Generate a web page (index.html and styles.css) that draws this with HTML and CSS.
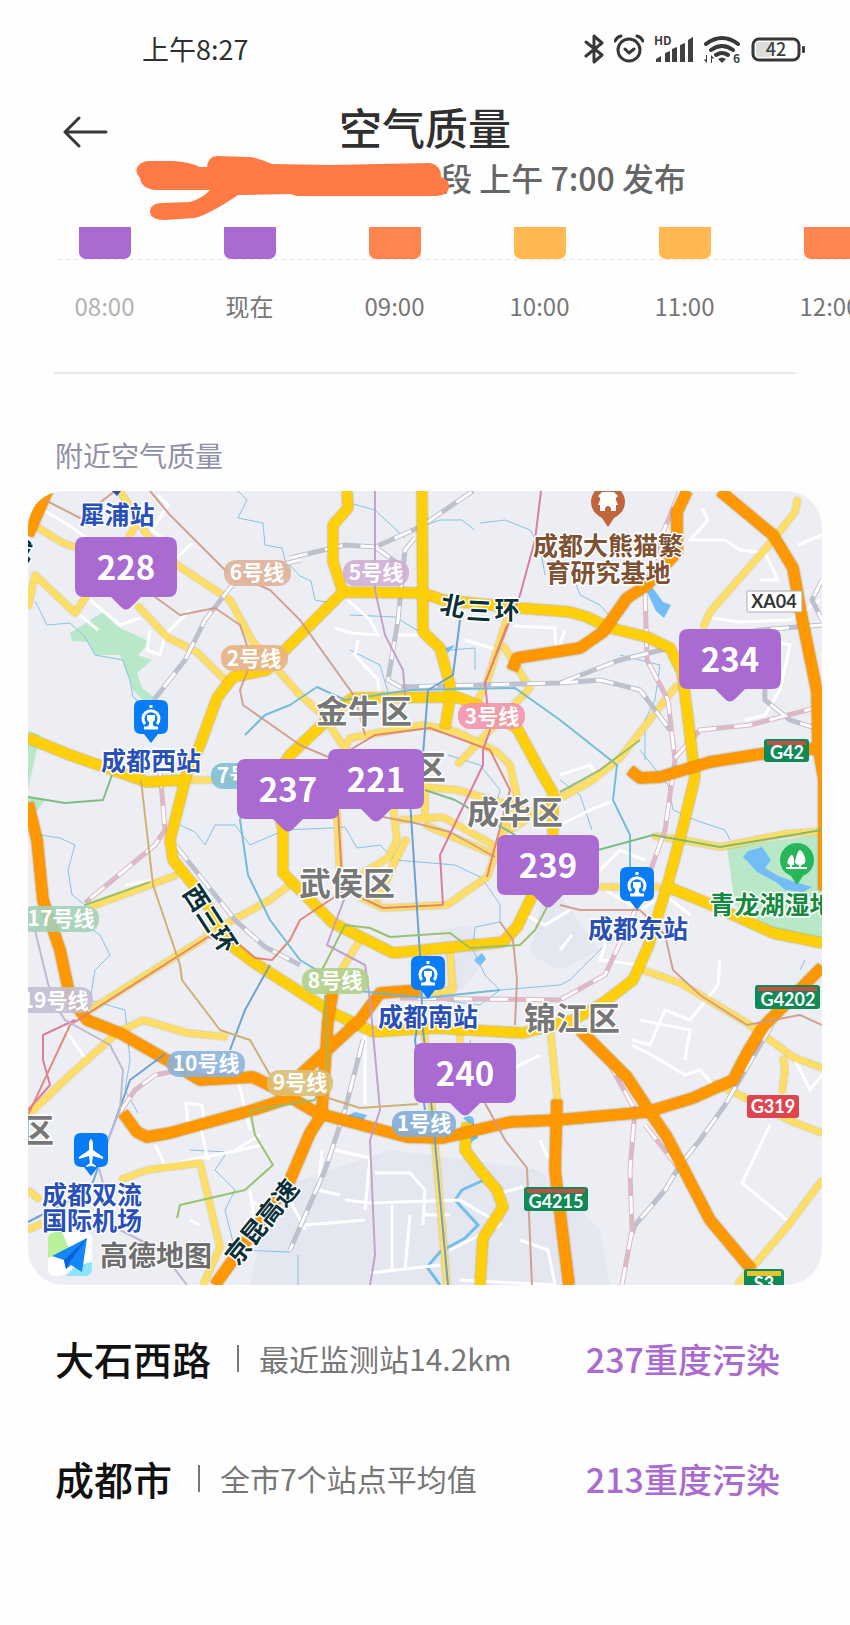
FILE: index.html
```
<!DOCTYPE html>
<html lang="zh-CN">
  <head>
    <meta charset="UTF-8" />
    <title>空气质量</title>
    <meta name="viewport" content="width=device-width, initial-scale=1.0" />
    <link rel="stylesheet" href="styles.css">
  </head>
  <body>
    <div class="status">
      <span class="time">上午8:27</span>
      <div class="status-icons">
        <svg width="20" height="32" viewBox="0 0 20 32" class="line">
          <path d="M2 9L18 22L10 29V3L18 10L2 23" />
        </svg>
        <svg width="30" height="32" viewBox="0 0 30 32" class="line">
          <circle cx="15" cy="17" r="11" />
          <path d="M11 16l4 4 5-4M1 8q2-4 6-5M29 8q-2-4-6-5" />
        </svg>
        <svg width="40" height="32" viewBox="0 0 40 32">
          <text x="0" y="12" class="tiny">HD</text>
          <path d="M2 29v-3l5-3v6zM11 29V20l5-2v11zM18 29V16l5-2v15zM26 29V12l5-2v19zM34 29V7l5-3v25z" />
        </svg>
        <svg width="37" height="32" viewBox="0 0 37 32">
          <path class="line thick" d="M2 11q16-12 32 0M7 17q11-8 22 0M12 22q6-4 12 0" />
          <path d="M18 30l-4-4q4-3 8 0zM3 22v8l-3-3 1-1 1 1v-5zM7 30v-8l3 3-1 1-1-1v5z" />
          <text x="29" y="30" class="tiny">6</text>
        </svg>
        <svg width="54" height="32" viewBox="0 0 54 32">
          <rect x="5" y="9" width="15" height="15" rx="2" fill="#ddd" />
          <rect class="line" x="2" y="6" width="46" height="21" rx="6" />
          <rect x="51" y="13" width="3" height="7" rx="1" />
          <text x="25" y="23" class="percent">42</text>
        </svg>
      </div>
    </div>

    <header class="header">
      <button class="back" aria-label="返回">
        <svg width="46" height="32" viewBox="0 0 46 32" class="line">
          <path d="M17 2L3 16l14 14M3 16h41" />
        </svg>
      </button>
      <h1>空气质量</h1>
    </header>
    <div class="publish">
      <p>段 上午 7:00 发布</p>
      <svg class="scribble" width="330" height="70" viewBox="128 152 330 70">
        <path d="M150 161H173Q190 162 200 167L207 167Q208 157 216 156L250 157Q262 159 272 164L330 165L430 163Q441 165 441 177Q450 180 449 188Q447 197 430 196L297 196L290 194L238 195Q210 214 195 218L165 220Q150 220 150 211Q151 203 162 203L190 202Q203 198 210 190H155Q141 188 140 178Q134 172 138 166Q142 161 150 161Z" />
      </svg>
    </div>

    <ul class="hours">
      <li class="past"><i class="bar heavy"></i><span>08:00</span></li>
      <li><i class="bar heavy"></i><span>现在</span></li>
      <li><i class="bar medium"></i><span>09:00</span></li>
      <li><i class="bar light"></i><span>10:00</span></li>
      <li><i class="bar light"></i><span>11:00</span></li>
      <li><i class="bar medium"></i><span>12:00</span></li>
    </ul>

    <hr>
    <h2>附近空气质量</h2>

    <svg class="map" viewBox="28 491 794 794">
      <defs>
        <path id="pin" d="M-42-73H42Q51-73 51-64V-22Q51-13 42-13H15L5-3Q0 2-5-3L-15-13H-42Q-51-13-51-22V-64Q-51-73-42-73Z" />
        <path id="pin-narrow" d="M-39-73H39Q48-73 48-64V-22Q48-13 39-13H15L5-3Q0 2-5-3L-15-13H-39Q-48-13-48-22V-64Q-48-73-39-73Z" />
        <path id="poi" d="M-10-43H10Q17-43 17-36V-16Q17-9 10-9H7L0 0L-7-9H-10Q-17-9-17-16V-36Q-17-43-10-43Z" />
        <g id="train">
          <use href="#poi" />
          <path class="glyph" d="M-6-19A8 8 0 1 1 6-19M0-38v3M-7-15H7" />
          <path fill="#fff" d="M-4-28H4V-23L2-21V-18L5-15H-5L-2-18V-21L-4-23Z" />
        </g>
        <path id="rail" d="M20 560M290 558L345 545L375 547L420 527L473 491M415 538L405 550L398 620L388 680L400 687L560 683L620 660L670 648M300 560L240 575L205 620L185 660L150 705M375 547L400 565M176 846L235 920L265 947L300 965M363 1040L345 1110L325 1170L290 1250M700 640L760 630L822 625M764 635L765 700L790 720L822 730M822 580L812 600L822 620M772 1025L725 1105L700 1140L680 1165L665 1190L635 1225L630 1240M560 683L600 680L640 690L670 730" />
        <path id="rail-pink" d="M160 770L165 830L155 845L85 903M680 491L660 540L645 590L647 660L668 700L675 760L665 830L640 900L605 975L560 1000L400 998M580 1035L610 1065L635 1110L630 1170L632 1230L622 1285M645 1125L680 1170M675 758L700 730L750 725L815 708M120 1112L135 1090L155 1075L180 1070" />
      </defs>

      <!-- parks and water -->
      <path class="park" d="M70 633L103 612L118 627L140 637L150 642L138 655L152 660L137 673L142 688L154 697L148 705L133 690L126 672L120 655L95 655L88 642L72 641ZM28 731L40 735L28 790ZM28 797L45 800L36 812L28 800ZM727 848L822 834V946L775 930L735 905Z" />
      <path class="shade" d="M440 930L470 925L485 960L462 990H440ZM540 905L560 895L600 950L560 970L530 955ZM270 1190L390 1150L540 1170L600 1230L610 1285H250Z" />
      <path class="lake" d="M743 857L748 851L762 847L771 860L765 868L778 876L795 882L812 887L803 892L785 890L776 882L757 872L748 862ZM647 592L653 588L663 602L671 605L664 618L656 611ZM345 1117L355 1112L367 1115L362 1122ZM474 960L482 953L486 959L480 966ZM463 1118Q475 1112 474 1124L478 1138L470 1143L474 1128ZM445 648L455 645L448 653Z" />
      <g class="river">
        <path d="M238 491L247 500L238 518L263 523L265 545L282 548L285 560L300 576L311 581L315 600L330 603L350 592M35 601L47 625L70 623L85 637L95 655L123 660L130 680L133 697L150 710" />
        <path d="M353 504L375 510L405 538M420 527L440 520L462 520L475 530M480 523L505 520L530 530L540 547L545 575M350 615L395 617L420 632M350 650L380 665L388 692M450 650L475 648L475 670" />
        <path d="M40 835L60 838L75 845L68 870L72 895L85 905L78 920L100 935L110 955L95 970L90 1000L125 1010L130 1060L125 1090L138 1113" />
        <path d="M180 825L195 832L205 845L215 825L235 825L250 845L285 830L330 828L345 827L357 848L380 845L395 860L455 865L482 878L500 905L500 922L475 927L473 950L485 975L500 990L480 1005L440 1000" />
        <path d="M448 755L480 765L500 790L495 810M640 750L668 785L673 810L695 820L725 830L730 840M560 780L580 795L592 830M573 576L580 595L600 605L618 625M620 655L660 665L655 700L645 720L645 760" />
        <path d="M500 990L560 985L570 980L605 945L630 925M470 1040L475 1065L462 1090M190 1150L227 1152L215 1170L235 1190L225 1210L235 1250L290 1252M298 1255V1285M805 960L800 970" />
      </g>
      <path class="river wide" d="M484 1180L462 1190L455 1200L478 1225L465 1238L440 1252L427 1267L440 1285" />

      <!-- local streets -->
      <g class="street">
        <path d="M45 511L65 523L90 540M90 600L120 625L140 618M150 630L147 650L160 655L165 635L190 610M192 543L177 558M80 615L98 630M158 495L168 505L152 530L165 540M348 600L370 620L378 635L352 633L335 628M358 640L355 655L378 680L380 705M395 635H420M465 640L498 650L503 632M513 626L555 628L556 655L565 630" />
        <path d="M702 508L708 520L690 540L725 540L740 550L765 553L778 580L760 580M712 618L740 622L790 620L820 600M767 640L790 645L780 690L765 715L745 720M798 545L822 535M560 775L590 765L600 780M560 825L590 810L615 800M600 870L620 850L645 860M610 930L600 960L640 965M720 960L718 985L690 1020L665 1010L650 1045L632 1040M560 950L572 935" />
        <path d="M632 1045L655 1057L685 1075L700 1070L713 1085M640 1020L690 1030L685 1060M770 1125L742 1183L787 1220M795 1060L810 1090L822 1075M186 1103L202 1105L204 1120L188 1122ZM155 1145L165 1165L240 1150L262 1145M200 1125L208 1160M225 1120L255 1115M238 1080L250 1130M250 1190L255 1225M235 1150L260 1135" />
        <path d="M365 1035V1105M335 1150L370 1158L365 1210M375 1173L410 1173L425 1190L423 1225M345 1200L370 1203L460 1200L502 1225M305 1225L365 1220M392 1205V1270M370 1273L440 1265M410 1215L405 1270M425 1215H450M450 1250L500 1225M500 1193L523 1187M520 1240L548 1250L555 1285L460 1280M540 1140L548 1158M322 1150L318 1190L340 1195M450 1100L540 1055" />
        <path d="M62 1025L85 1058M290 1200L305 1230M250 1200L275 1215M190 1220L200 1225M125 885L155 880M605 890L640 910L665 895L690 915M525 915L545 925L570 910" />
      </g>

      <!-- secondary roads -->
      <g class="road second">
        <path d="M37 527L63 543L78 548M120 491L147 535L177 565L230 600L253 642L300 695L323 715L347 752M137 605L167 637L197 652L227 682M28 608L35 575L75 613L87 595M123 548L137 522" />
        <path d="M798 498L795 512L777 535L760 555L710 612L703 628M677 685L620 758L593 780L560 798L510 830M600 887L660 887M643 970L680 983L747 1023L793 1057L822 1068M783 1057L785 1070L782 1093M713 1083L740 1095L793 1122L822 1133M822 1180L787 1227L737 1285" />
        <path d="M550 1027L558 1105M90 907L177 875M205 935L270 900L292 883M90 1010L205 938M28 1115L70 1075L117 1033L143 1020L187 1033L227 1037M120 1180L147 1170L200 1163L220 1247L203 1285M28 1190L40 1200M28 1230L43 1223M183 780L240 780M653 836L683 840L720 847L785 834L822 831" />
        <path d="M337 810L340 883L360 897L383 908L447 905L487 877L517 797L510 765L497 752L457 732L423 725L350 738L343 752M423 787L457 790L545 815M400 820L443 817L497 847M425 780V822M425 825L500 857M393 805L397 840L388 858L363 873M407 838L393 865L378 900M360 940L327 993M450 950L453 990L430 993M503 645L530 688L457 765M423 1020L433 1120L447 1285M460 1030V1045M507 618L487 682L478 700" />
      </g>

      <!-- railways: solid line under a white dash -->
      <g class="rail">
        <use href="#rail" />
        <use href="#rail-pink" class="pink" />
      </g>
      <g class="rail dash">
        <use href="#rail" />
        <use href="#rail-pink" />
      </g>

      <!-- main roads -->
      <g class="road main">
        <path d="M343 592L423 593L443 600L520 608L570 612L587 617L610 628L647 637L670 648L682 672L688 718L695 777L683 827L668 883L648 947L633 980L603 1003L573 1020L523 1033L433 1028L373 1032L333 1013L253 962L233 947L200 893L173 860L170 840L187 773L200 745L217 698L233 677L267 670L283 652L300 635Z" />
        <path d="M347 491L348 508L333 525V562L343 592M422 491L423 632L440 648L450 685L450 698L445 728M345 703L353 698L457 697L477 705L517 728L537 765L553 793V845M345 703L290 755L273 780L283 830V873L333 923L393 953L503 942L517 927L535 890" />
        <path d="M28 738L70 755L147 782L183 780M668 887L707 903L773 933L822 943M467 1123L465 1150L480 1170L497 1190L503 1207L483 1238L480 1285" />
      </g>

      <!-- expressways -->
      <g class="road express">
        <path d="M50 485L28 535M687 491L677 512V552L647 585L627 598L603 632L580 648L517 658L512 670M720 491L773 535L793 568L802 618L817 692L818 745L824 780V890M630 770L640 778L660 777L710 762L767 753L822 748" />
        <path d="M28 803L37 840L43 900L60 950L70 997L87 1020L120 1033L167 1060L200 1080L253 1077L273 1087L317 1113L407 1137L443 1138L510 1122L557 1120L647 1112L693 1098L733 1080L747 1053L763 1027L822 967M123 1113L137 1132L147 1137L170 1133L253 1110L290 1098" />
        <path d="M323 1113L310 1133L290 1180L215 1285M322 1110L328 1020L333 990M300 1075L360 1020L380 993L420 990M580 1030L627 1077L650 1112L667 1137L710 1220L752 1270M557 1100L555 1170L563 1237L569 1285" />
      </g>

      <!-- metro lines -->
      <g class="metro">
        <path stroke="#cf9a85" d="M45 500L80 518L115 491M150 491L170 515L225 570L270 590L300 620L355 697L365 735M155 597L180 615L215 608L240 625L252 660L240 690L243 705L300 745L335 760M383 817L415 823L450 832L495 857M500 922L513 940L517 980L515 1025M485 1103L505 1140L527 1168L532 1285M560 905L580 910L640 910L665 935L673 970L700 995L747 1025L800 1015L822 1025" />
        <path stroke="#c09ac9" d="M375 491V590L385 635L403 670L406 705M345 897L327 945L365 965L370 1000L380 1110L370 1140L375 1255L370 1285" />
        <path stroke="#db6f9b" d="M541 491L535 540L520 595L485 683L490 730L483 750V765L440 855L443 905M28 1110L50 1085L43 1060V1035L75 1020" />
        <path stroke="#df806e" d="M507 625L485 683M443 905L383 908L345 890L300 920L290 940L272 960L255 958L240 945L208 937L70 1025L28 1115M338 810L342 880M350 750L375 735L430 728L490 750L510 790L487 877" />
        <path stroke="#68b8d2" d="M255 770L240 820L248 875L270 920L300 960L350 990L425 998L500 990M245 735L265 715L290 705L317 687L345 700L410 690L515 688L560 720L617 765L613 800L630 835V880" />
        <path stroke="#6199d0" d="M460 620L453 675L428 690L423 755M410 800L420 955L423 1030L433 1120L448 1285M420 1010L415 1040L425 1110M230 1050L245 1010L270 965M165 1054L130 1080L110 1135L90 1190L28 1222" />
        <path stroke="#72b77a" d="M28 797L65 803L103 800L112 775M425 790L455 800L515 835M598 850L653 835L720 847L822 830" />
        <path stroke="#92bd65" d="M85 905L150 882M322 970L345 925L370 928L390 937L450 933L470 948L520 945L535 930L548 905M560 792L600 770L640 740M250 1110L255 1135L273 1165L245 1190L180 1205L177 1218M325 995L328 1060L315 1100L253 1110" />
        <path stroke="#ccab67" d="M141 780L153 885L180 965L182 980L220 1030L250 1040L270 1075M325 1097L360 1108L418 1104" />
        <path stroke="#bcb2d0" d="M35 930L52 1000L65 1020L110 1045L123 1070L120 1110L98 1165L105 1190M120 1230L160 1250L187 1285" />
      </g>

      <g class="line-tag">
        <rect x="224" y="560" width="67" height="26" rx="12" fill="#e0b199" /><text x="257" y="580">6号线</text>
        <rect x="221" y="645" width="67" height="26" rx="12" fill="#e8b286" /><text x="254" y="666">2号线</text>
        <rect x="343" y="560" width="66" height="26" rx="12" fill="#cfaed6" /><text x="376" y="580">5号线</text>
        <rect x="458" y="703" width="67" height="26" rx="12" fill="#f393ac" /><text x="492" y="724">3号线</text>
        <rect x="211" y="763" width="67" height="26" rx="12" fill="#82bfd6" /><text x="244" y="783">7号线</text>
        <rect x="20" y="906" width="79" height="26" rx="12" fill="#a5cfb7" /><text x="61" y="926">17号线</text>
        <rect x="14" y="987" width="79" height="26" rx="12" fill="#c4bcd4" /><text x="55" y="1008">19号线</text>
        <rect x="167" y="1051" width="78" height="26" rx="12" fill="#8cb3dd" /><text x="206" y="1071">10号线</text>
        <rect x="267" y="1070" width="66" height="26" rx="12" fill="#dcbf78" /><text x="300" y="1090">9号线</text>
        <rect x="302" y="968" width="67" height="26" rx="12" fill="#b0d08a" /><text x="335" y="988">8号线</text>
        <rect x="392" y="1111" width="64" height="26" rx="12" fill="#84add8" /><text x="424" y="1131">1号线</text>
      </g>

      <g class="shield">
        <rect x="747" y="591" width="55" height="21" rx="1" fill="#fff" stroke="#aaa" />
        <text x="774" y="608" class="dark">XA04</text>
        <rect x="764" y="739" width="45" height="23" rx="3" fill="#0f8a57" /><path fill="#c14f43" d="M767 741h39v4h-39z" />
        <text x="787" y="759">G42</text>
        <rect x="755" y="985" width="65" height="24" rx="3" fill="#0f8a57" /><path fill="#c14f43" d="M758 987h59v4h-59z" />
        <text x="788" y="1006">G4202</text>
        <rect x="524" y="1187" width="64" height="24" rx="3" fill="#0f8a57" /><path fill="#c14f43" d="M527 1189h58v4h-58z" />
        <text x="556" y="1208">G4215</text>
        <rect x="747" y="1095" width="52" height="23" rx="3" fill="#df454e" />
        <text x="773" y="1113">G319</text>
        <rect x="744" y="1269" width="40" height="25" rx="3" fill="#0f8a57" /><path fill="#e8c32e" d="M747 1271h34v5h-34z" />
        <text x="764" y="1290">S3</text>
      </g>

      <g class="label district">
        <text x="364" y="723">金牛区</text>
        <text x="430" y="779">区</text>
        <text x="515" y="824">成华区</text>
        <text x="347" y="895">武侯区</text>
        <text x="572" y="1030">锦江区</text>
        <text x="38" y="1142">区</text>
      </g>
      <g class="label place">
        <text x="117" y="524">犀浦站</text>
        <text x="151" y="770">成都西站</text>
        <text x="638" y="938">成都东站</text>
        <text x="428" y="1026">成都南站</text>
        <text x="92" y="1204">成都双流</text>
        <text x="92" y="1230">国际机场</text>
      </g>
      <g class="label place brown">
        <text x="608" y="555">成都大熊猫繁</text>
        <text x="608" y="582">育研究基地</text>
      </g>
      <g class="label place green">
        <text x="772" y="914">青龙湖湿地</text>
      </g>
      <g class="label place ring">
        <text x="453" y="615" transform="rotate(12 453 605)">北</text>
        <text x="479" y="620" transform="rotate(3 479 611)">三</text>
        <text x="507" y="619">环</text>
        <text x="210" y="928" transform="rotate(57 210 919)">西三环</text>
        <text x="262" y="1231" transform="rotate(-51 262 1222)">京昆高速</text>
        <text x="20" y="560" transform="rotate(10 20 550)">成</text>
      </g>

      <!-- points of interest -->
      <path fill="#2850b8" d="M112 491h9l-4 5z" />
      <g fill="#087cf5">
        <use href="#train" x="151" y="743" />
        <use href="#train" x="637" y="910" />
        <use href="#train" x="428" y="999" />
        <use href="#poi" x="91" y="1176" />
      </g>
      <path fill="#fff" d="M91 1139Q93 1140 93 1145V1150L103 1157V1159L93 1156L92 1163L96 1166V1167L91 1166L86 1167V1166L90 1163L89 1156L79 1159V1157L89 1150V1145Q89 1140 91 1139Z" />
      <path fill="#c0653c" d="M608 527L602 518Q591 512 591 502A17 17 0 1 1 625 502Q625 512 614 518Z" />
      <path fill="#fff" d="M598 496L602 492H614L618 496L616 498V500L618 505H616V511H611V508Q608 504 605 508V511H600V505H598L600 500V498Z" />
      <path fill="#29b659" d="M797 885L791 876Q780 871 780 860A17 17 0 1 1 814 860Q814 871 803 876Z" />
      <path fill="#fff" d="M799 865Q793 864 796 858Q798 850 800 850Q803 851 805 858Q807 864 801 865V867H807V869H786V867H790V865Q786 864 788 860Q791 853 793 856Q795 860 794 865H792V867H799Z" />

      <g class="pin">
        <use href="#pin" x="126" y="610" /><text x="126" y="580">228</text>
        <use href="#pin" x="730" y="702" /><text x="730" y="672">234</text>
        <use href="#pin-narrow" x="376" y="822" /><text x="376" y="792">221</text>
        <use href="#pin" x="288" y="832" /><text x="288" y="802">237</text>
        <use href="#pin" x="548" y="908" /><text x="548" y="878">239</text>
        <use href="#pin" x="465" y="1116" /><text x="465" y="1086">240</text>
      </g>

      <g class="brand">
        <path fill="#b9f09c" d="M56 1232H64L71 1252L48 1258V1240Q48 1232 56 1232Z" />
        <path fill="#fff" d="M62 1232H84Q92 1232 92 1240V1262L60 1276H56Q48 1276 48 1268V1258L70 1250Z" />
        <path fill="#8de4fb" d="M66 1276L75 1266L92 1262V1268Q92 1276 84 1276Z" />
        <path fill="#1687f8" d="M87 1238L52 1256L64 1260L66 1269L71 1265L82 1272Z" />
        <path fill="#0764d8" d="M87 1238L64 1260L66 1269L70 1262Z" />
        <text x="100" y="1266">高德地图</text>
      </g>
    </svg>

    <div class="station">
      <strong>大石西路</strong>
      <span class="note">最近监测站14.2km</span>
      <span class="level">237重度污染</span>
    </div>
    <div class="station">
      <strong>成都市</strong>
      <span class="note">全市7个站点平均值</span>
      <span class="level">213重度污染</span>
    </div>
  </body>
</html>
```
FILE: styles.css
```
* {
  box-sizing: border-box;
}
body {
  margin: 0;
  padding-bottom: 84px;
  background: #fefefe;
  color: #303030;
  font-family: "Noto Sans CJK SC", sans-serif;
  overflow-x: hidden;
}
h1,
h2,
p,
ul {
  margin: 0;
  padding: 0;
  font-weight: 500;
}
.status {
  display: flex;
  justify-content: space-between;
  padding: 33px 45px 0 142px;
}
.time {
  font-size: 27px;
  line-height: 32px;
}
.status-icons {
  display: flex;
  gap: 10px;
  fill: #404040;
}
.line {
  fill: none;
  stroke: #383838;
  stroke-width: 3;
  stroke-linecap: round;
  stroke-linejoin: round;
}
.thick {
  stroke-width: 4;
}
.tiny {
  font-size: 12px;
  font-weight: bold;
}
.percent {
  font-size: 18px;
  font-weight: 500;
  text-anchor: middle;
}
.header {
  display: grid;
  grid-template-columns: 46px 1fr 46px;
  align-items: end;
  margin-top: 31px;
  padding: 0 62px;
}
.back {
  height: 46px;
  padding: 0;
  border: none;
  background: none;
  cursor: pointer;
}
h1 {
  font-size: 43px;
  line-height: 60px;
  text-align: center;
}
.publish {
  position: relative;
  width: 522px;
  margin: 0 auto;
  padding-top: 1px;
}
.publish p {
  color: #666;
  font-size: 32px;
  line-height: 40px;
  text-align: right;
}
.scribble {
  position: absolute;
  top: -4px;
  left: -36px;
  fill: #ff7a45;
}
.hours {
  display: grid;
  grid-template-columns: repeat(6, 145px);
  margin-top: 30px;
  padding-left: 32px;
  overflow: hidden;
  list-style: none;
  color: #777;
  background: repeating-linear-gradient(90deg, #e4e4e4 0 4px, transparent 4px 8px) 58px 32px / 100% 1px no-repeat;
}
.hours li {
  text-align: center;
}
.bar {
  display: block;
  width: 52px;
  height: 32px;
  margin: 0 auto;
  border-radius: 0 0 7px 7px;
}
.hours span {
  display: block;
  padding-top: 28px;
  font-size: 24px;
  font-weight: 400;
  line-height: 38px;
}
.past {
  color: #b2b2b2;
}
.heavy {
  background: #a96bd1;
}
.medium {
  background: #ff8450;
}
.light {
  background: #ffb950;
}
hr {
  height: 2px;
  margin: 47px 54px 0;
  border: none;
  background: #e8e8ea;
}
h2 {
  margin: 61px 55px 16px;
  color: #9090a6;
  font-size: 28px;
  font-weight: 400;
  line-height: 40px;
}
.map {
  display: block;
  width: calc(100% - 56px);
  margin: 0 28px 13px;
  border-radius: 36px;
  background: #eceef4;
}
.park {
  fill: #b9e8c9;
}
.shade {
  fill: #e5e7f0;
}
.lake {
  fill: #73bdf7;
}
.river {
  fill: none;
  stroke: #85c4e6;
  stroke-width: 1;
}
.wide {
  stroke: #72bfec;
  stroke-width: 3;
}
.street {
  fill: none;
  stroke: #fff;
  stroke-width: 3;
}
.rail {
  fill: none;
  stroke: #bfc0cd;
  stroke-width: 5;
}
.pink {
  stroke: #dcb9c4;
}
.dash {
  stroke: #fff;
  stroke-width: 3;
  stroke-dasharray: 18 18;
}
.road {
  fill: none;
  stroke-linejoin: round;
}
.second {
  stroke: #ffdf63;
  stroke-width: 6;
  filter: drop-shadow(0 0 1px #d9ae3c);
}
.main {
  stroke: #ffd00a;
  stroke-width: 10;
  filter: drop-shadow(0 0 1px #b58d1c);
}
.express {
  stroke: #ff9800;
  stroke-width: 11;
  filter: drop-shadow(0 0 1px #a8701c);
}
.metro {
  fill: none;
  stroke-width: 2;
  stroke-linejoin: round;
  opacity: 0.9;
}
.line-tag rect {
  opacity: 0.9;
}
.line-tag text {
  fill: #fff;
  font-size: 21px;
  font-weight: bold;
  text-anchor: middle;
}
.shield text {
  fill: #fff;
  font-family: Lato, sans-serif;
  font-size: 18px;
  font-weight: bold;
  text-anchor: middle;
}
.shield .dark {
  fill: #333;
}
.label {
  stroke: #fff;
  stroke-width: 3;
  stroke-linejoin: round;
  paint-order: stroke;
  text-anchor: middle;
}
.district {
  fill: #777;
  font-size: 32px;
  font-weight: bold;
}
.place {
  fill: #2850b8;
  font-size: 25px;
  font-weight: bold;
}
.brown {
  fill: #7d5132;
}
.green {
  fill: #14893f;
}
.ring {
  fill: #0a3038;
}
.glyph {
  fill: none;
  stroke: #fff;
  stroke-width: 3;
}
.pin {
  fill: #a96bd1;
}
.pin text {
  fill: #fff;
  font-size: 33px;
  font-weight: bold;
  text-anchor: middle;
}
.brand text {
  fill: #6e6e6e;
  stroke: #fff;
  stroke-width: 2;
  paint-order: stroke;
  font-size: 28px;
  font-weight: bold;
}
.station {
  display: flex;
  align-items: center;
  height: 120px;
  padding: 0 70px 0 55px;
}
.station strong {
  color: #111;
  font-size: 39px;
  font-weight: 500;
}
.note {
  display: flex;
  align-items: center;
  margin-left: 26px;
  color: #777;
  font-size: 30px;
}
.note::before {
  content: "";
  width: 2px;
  height: 27px;
  margin-right: 20px;
  background: #777;
}
.level {
  margin-left: auto;
  color: #a96bcf;
  font-size: 34px;
  font-weight: 500;
}
```
